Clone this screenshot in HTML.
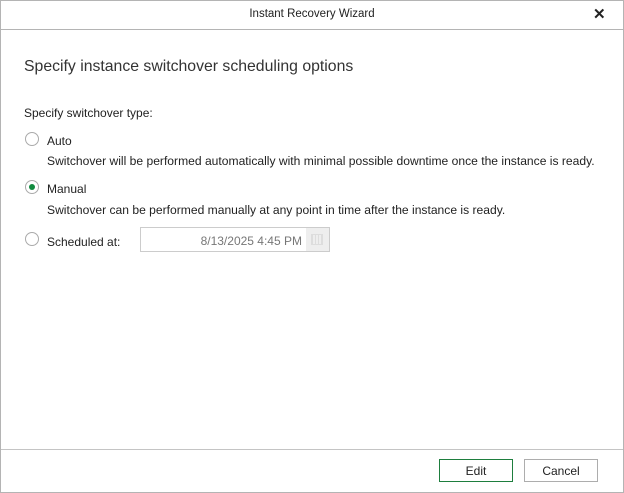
<html><head><style>
body{margin:0;width:624px;height:493px;overflow:hidden;font-family:"Liberation Sans",sans-serif;color:#222;background:#fff;position:relative}
.win{position:absolute;left:0;top:0;width:622px;height:491px;border:1px solid #b4b4b4}
.t{position:absolute;white-space:nowrap}
.r{position:absolute;width:14px;height:14px;border:1px solid #aaa;border-radius:50%;box-sizing:border-box;background:#fff}
.btn{position:absolute;top:459px;width:74px;height:23px;box-sizing:border-box;border:1px solid #adadad;font-size:12px;text-align:center;line-height:23px;background:#fff}
</style></head><body><div class="win"></div>
<div style="position:absolute;left:1px;top:29px;width:622px;height:1px;background:#b4b4b4"></div>
<div class="t" style="left:0;width:624px;text-align:center;top:8px;font-size:11.5px">Instant Recovery Wizard</div>
<div class="t" style="left:593px;top:5px;font-size:15px;font-weight:bold">✕</div>
<div class="t" style="left:24px;top:58px;font-size:15.8px;color:#333">Specify instance switchover scheduling options</div>
<div class="t" style="left:24px;top:106px;font-size:12px">Specify switchover type:</div>
<div class="r" style="left:25px;top:132px"></div>
<div class="t" style="left:47px;top:134px;font-size:12px">Auto</div>
<div class="t" style="left:47px;top:154px;font-size:12.1px">Switchover will be performed automatically with minimal possible downtime once the instance is ready.</div>
<div class="r" style="left:25px;top:180px"><div style="position:absolute;left:3px;top:3px;width:6px;height:6px;border-radius:50%;background:#108a3e"></div></div>
<div class="t" style="left:47px;top:182px;font-size:12px">Manual</div>
<div class="t" style="left:47px;top:203px;font-size:12.1px">Switchover can be performed manually at any point in time after the instance is ready.</div>
<div class="r" style="left:25px;top:232px"></div>
<div class="t" style="left:47px;top:235px;font-size:12px">Scheduled at:</div>
<div style="position:absolute;left:140px;top:227px;width:190px;height:25px;box-sizing:border-box;border:1px solid #ccc"></div>
<div class="t" style="left:140px;width:162px;text-align:right;top:234px;font-size:12px;color:#777">8/13/2025 4:45 PM</div>
<div style="position:absolute;left:306px;top:228px;width:23px;height:23px;background:#eee"><div style="position:absolute;left:5px;top:6px;width:12px;height:11px;border:1px solid #ddd;box-sizing:border-box;background:repeating-linear-gradient(90deg,#ddd 0 1px,transparent 1px 3px)"></div></div>
<div style="position:absolute;left:1px;top:449px;width:622px;height:1px;background:#c4c4c4"></div>
<div class="btn" style="left:439px;border-color:#1e7e3e">Edit</div>
<div class="btn" style="left:524px">Cancel</div>
</body></html>
